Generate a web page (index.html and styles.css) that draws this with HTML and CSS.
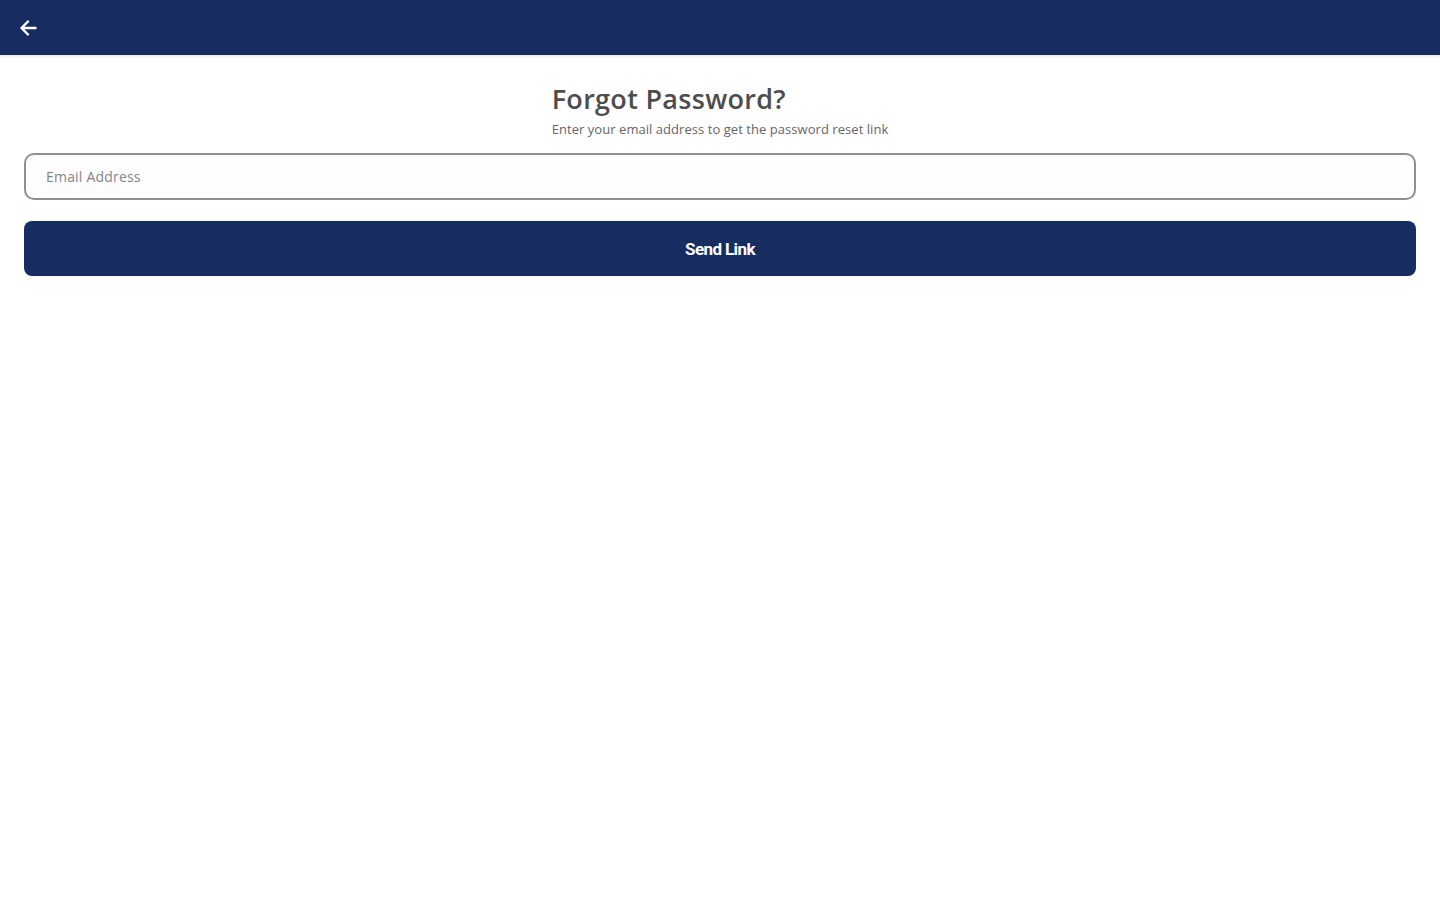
FILE: index.html
```html
<!DOCTYPE html>
<html lang="en">
<head>
<meta charset="utf-8">
<title>Forgot Password</title>
<link rel="stylesheet" href="styles.css">
</head>
<body>
<header class="topbar">
  <button class="back" aria-label="Back">
    <svg width="18" height="18" viewBox="0 0 18 18"><path d="M16.5 9H2.5M9 2.5L2.5 9 9 15.5" fill="none" stroke="#fff" stroke-width="2.4" stroke-linecap="round" stroke-linejoin="round"/></svg>
  </button>
</header>
<main class="content">
  <div class="heading">
    <h1 class="title">Forgot Password?</h1>
    <p class="subtitle">Enter your email address to get the password reset link</p>
  </div>
  <input class="field" type="email" placeholder="Email Address">
  <button class="send">Send Link</button>
</main>
</body>
</html>
```
FILE: styles.css
```css
* { box-sizing: border-box; }
html, body { margin: 0; padding: 0; background: #fff; }
body { font-family: "Open Sans", "Noto Sans", sans-serif; color: #4a4a4a; }
.topbar {
  height: 55px;
  background: #172c60;
  display: flex;
  align-items: center;
  padding-left: 19px;
  box-shadow: 0 1px 2px rgba(0,0,0,0.15);
}
.back {
  background: none;
  border: none;
  padding: 0;
  width: 18px;
  height: 18px;
  display: flex;
  cursor: pointer;
}
.content {
  display: flex;
  flex-direction: column;
  padding: 0 24px;
}
.heading {
  align-self: center;
  padding-top: 27px;
  margin-bottom: 15px;
}
.title {
  margin: 0;
  font-size: 27px;
  font-weight: 600;
  color: #4d4d4d;
  line-height: 34px;
  letter-spacing: 0.3px;
}
.subtitle {
  margin: 4px 0 0;
  font-size: 13px;
  color: #666;
  line-height: 18px;
  letter-spacing: 0.05px;
}
.field {
  height: 47px;
  border: 2px solid #8f8f8f;
  border-radius: 10px;
  background: #fdfdfd;
  padding: 0 20px;
  font-family: inherit;
  font-size: 14px;
  color: #333;
  outline: none;
}
.field::placeholder { color: #858585; letter-spacing: 0.2px; }
.send {
  margin-top: 21px;
  height: 55px;
  border: none;
  border-radius: 8px;
  background: #172c60;
  color: #fff;
  font-family: Roboto, "Liberation Sans", sans-serif;
  font-weight: 700;
  font-size: 17px;
  letter-spacing: -0.6px;
  cursor: pointer;
}
```
